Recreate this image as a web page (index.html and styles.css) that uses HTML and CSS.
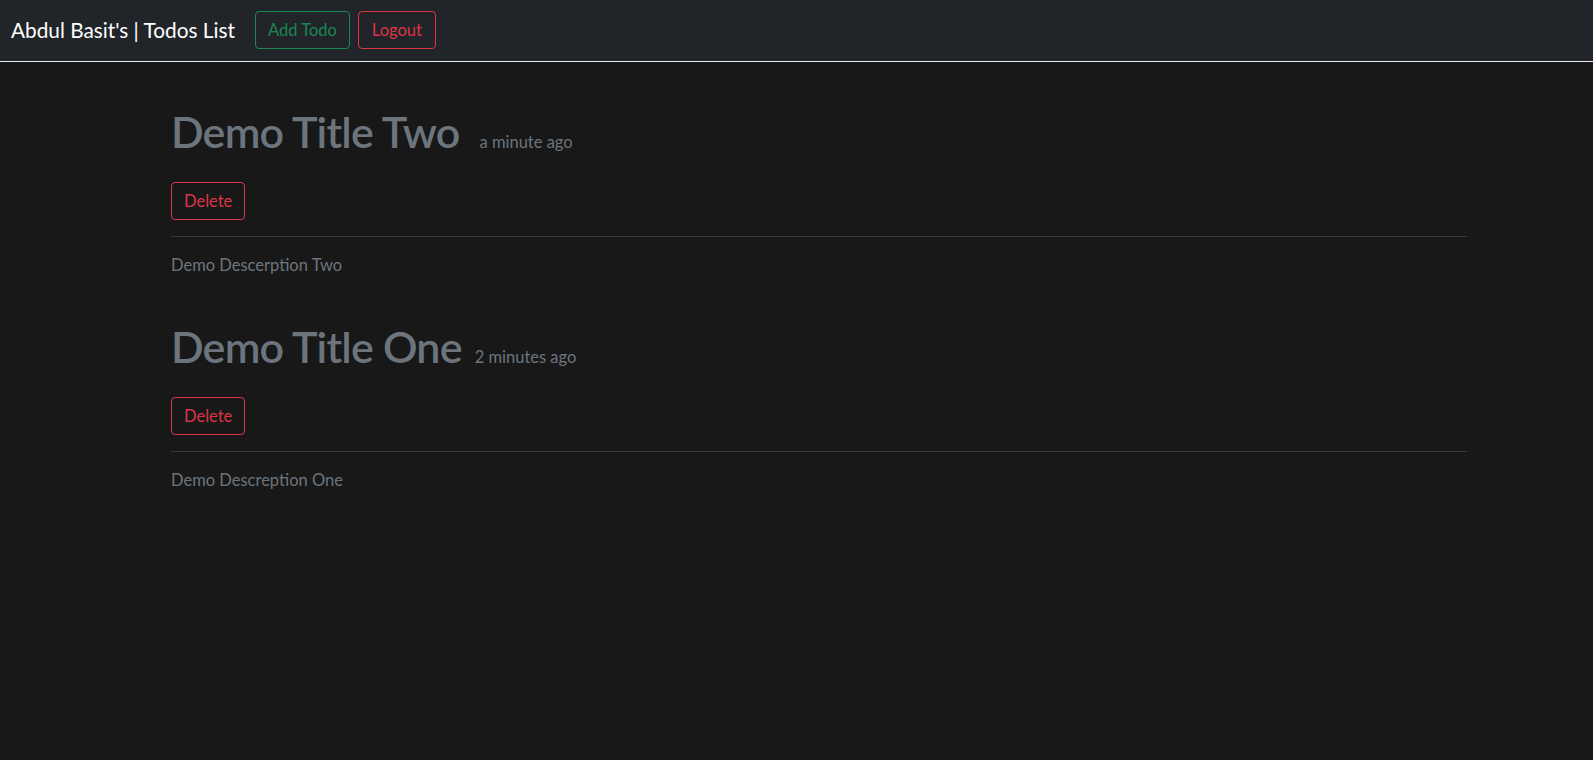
FILE: index.html
```html
<!DOCTYPE html>
<html lang="en">
<head>
<meta charset="utf-8">
<title>Todos List</title>
<link rel="stylesheet" href="styles.css">
</head>
<body>
<nav class="navbar">
  <span class="brand">Abdul Basit's | Todos List</span>
  <button class="btn btn-green">Add Todo</button>
  <button class="btn btn-red btn-logout">Logout</button>
</nav>
<main class="container">
  <section class="todo">
    <div class="todo-head">
      <h1 class="todo-title">Demo Title Two</h1>
      <span class="todo-time time-wide">a minute ago</span>
    </div>
    <button class="btn btn-red btn-delete">Delete</button>
    <hr class="divider">
    <p class="todo-desc">Demo Descerption Two</p>
  </section>
  <section class="todo">
    <div class="todo-head">
      <h1 class="todo-title">Demo Title One</h1>
      <span class="todo-time">2 minutes ago</span>
    </div>
    <button class="btn btn-red btn-delete">Delete</button>
    <hr class="divider">
    <p class="todo-desc">Demo Descreption One</p>
  </section>
</main>
</body>
</html>
```
FILE: styles.css
```css
* { box-sizing: border-box; }
html, body {
  margin: 0;
  padding: 0;
}
body {
  background: #181818;
  color: #dee2e6;
  font-family: Lato, "Open Sans", sans-serif;
  font-size: 16px;
  line-height: 1.5;
  min-height: 760px;
}
.navbar {
  height: 62px;
  background: #212529;
  border-bottom: 1px solid #e9ecef;
  display: flex;
  align-items: center;
  padding: 0 12px 1px 11px;
}
.brand {
  color: #ffffff;
  font-size: 20.8px;
  margin-right: 20px;
  white-space: nowrap;
}
.btn {
  font-family: inherit;
  font-size: 16.5px;
  line-height: 24px;
  padding: 6px 12px;
  background: transparent;
  border: 1px solid;
  border-radius: 4px;
  height: 38px;
  cursor: pointer;
}
.btn-green {
  color: #198754;
  border-color: #198754;
  margin-right: 8px;
}
.btn-red {
  color: #dc3545;
  border-color: #dc3545;
}
.btn-logout {
  padding: 6px 13px;
}
.container {
  width: 1296px;
  margin-left: 171px;
  padding-top: 43px;
  display: flex;
  flex-direction: column;
  gap: 43px;
}
.todo {
  display: flex;
  flex-direction: column;
  align-items: flex-start;
}
.todo-head {
  display: flex;
  align-items: baseline;
  height: 54px;
}
.todo-title {
  margin: 0;
  font-size: 43px;
  line-height: 54px;
  font-weight: 600;
  letter-spacing: -0.8px;
  color: #6c757d;
}
.todo-time {
  margin-left: 13px;
  font-size: 16.5px;
  color: #6c757d;
}
.time-wide { margin-left: 20px; }
.btn-delete {
  margin-top: 23px;
}
.divider {
  align-self: stretch;
  margin: 16px 0;
  border: 0;
  border-top: 1px solid #3a3a3a;
}
.todo-desc {
  margin: 0;
  font-size: 16.5px;
  color: #6c757d;
  line-height: 24px;
}
```
